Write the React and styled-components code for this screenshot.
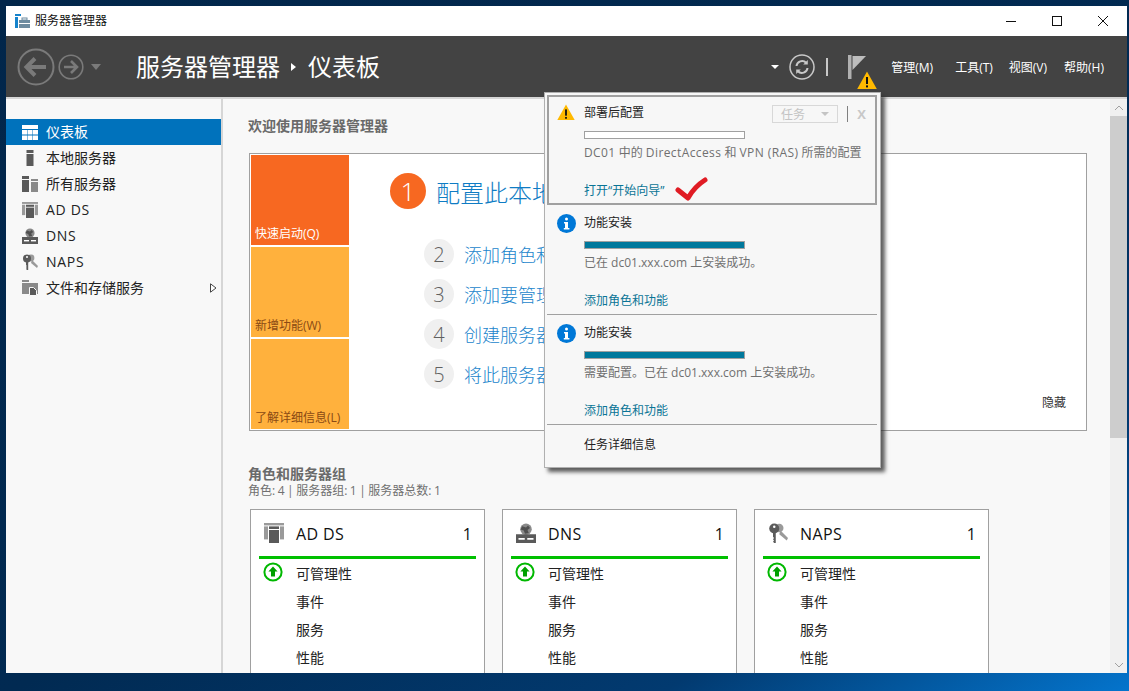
import React from 'react';
import styled, { createGlobalStyle } from 'styled-components';

const GlobalStyle = createGlobalStyle`
  html, body {
    margin: 0;
    height: 100%;
  }
  * {
    box-sizing: border-box;
  }
`

const FONT = `"Open Sans", "Noto Sans CJK SC", sans-serif`

const Desktop = styled.div`
  width: 100vw;
  height: 100vh;
  overflow: hidden;
  padding: 6px 2px 18px 6px;
  font-family: ${FONT};
  background: linear-gradient(150deg, #02264a 0%, #012a52 52%, #023a70 80%, #0474cc 100%);
`

const Window = styled.div`
  position: relative;
  height: 100%;
  display: flex;
  flex-direction: column;
  background: #f8f8f8;
`

// wider latin capitals, as in the system font of the screenshot
const Latin = styled.span`
  letter-spacing: 0.4px;
`

// ------------------- title bar

const TitleBar = styled.div`
  height: 30px;
  flex: none;
  display: flex;
  align-items: center;
  padding: 0 1px 0 9px;
  background: white;
  color: #111;
  font-size: 12px;
`

const TitleText = styled.span`
  flex: 1;
  margin: 0 0 2px 5px;
`

const WinButton = styled.div`
  width: 46px;
  height: 30px;
  display: flex;
  align-items: center;
  justify-content: center;
`

// ------------------- dark header

const Header = styled.div`
  height: 63px;
  flex: none;
  display: flex;
  align-items: center;
  padding: 1px 23px 0 11px;
  background: #434343;
  border-bottom: 2px solid #d6d6d6;
`

const NavButtons = styled.div`
  display: flex;
  align-items: center;
  gap: 3px;
  width: 119px;
`

const Crumbs = styled.div`
  flex: 1;
  display: flex;
  align-items: center;
  gap: 10px;
  color: white;
  font-size: 24px;
  line-height: 32px;
`

const CrumbArrow = styled.i`
  width: 0;
  height: 0;
  margin: 0 2px 0 1px;
  border-left: 5px solid white;
  border-top: 4px solid transparent;
  border-bottom: 4px solid transparent;
`

const DownCaret = styled.i`
  width: 0;
  height: 0;
  margin-right: 10px;
  border-top: 4px solid white;
  border-left: 4px solid transparent;
  border-right: 4px solid transparent;
`

const HeaderDivider = styled.i`
  width: 2px;
  height: 18px;
  margin: 0 20px 0 11px;
  background: #c8c8c8;
`

const FlagBox = styled.div`
  position: relative;
  width: 18px;
  height: 24px;
  margin-right: 25px;
`

const FlagWarn = styled.div`
  position: absolute;
  left: 9px;
  top: 16px;
  line-height: 0;
`

const MenuItem = styled.span`
  color: white;
  font-size: 12px;
  margin-left: ${p => p.$gap}px;
`

// ------------------- body

const Body = styled.div`
  flex: 1;
  min-height: 0;
  display: flex;
`

const Sidebar = styled.div`
  width: 217px;
  flex: none;
  padding-top: 20px;
  border-right: 2px solid #d6d6d6;
`

const NavRow = styled.div`
  height: 26px;
  display: flex;
  align-items: center;
  padding-left: 16px;
  gap: 8px;
  font-size: 14px;
  color: ${p => (p.$active ? 'white' : '#222')};
  background: ${p => (p.$active ? '#0072bc' : 'transparent')};
`

const NavLabel = styled.span`
  flex: 1;
  padding-bottom: 2px;
  letter-spacing: ${p => (p.$latin ? '0.7px' : '0')};
`

const NavArrow = styled.svg`
  margin-right: 4px;
`

const Content = styled.div`
  flex: 1;
  min-width: 0;
  overflow: hidden;
  padding: 17px 23px 0 25px;
`

const Heading = styled.div`
  font-size: 14px;
  line-height: 20px;
  font-weight: 700;
  color: #6a6a6a;
`

const WelcomePanel = styled.div`
  height: 278px;
  margin: 17px 0 0 1px;
  display: flex;
  padding: 1px;
  border: 1px solid #a0a0a0;
  background: white;
`

const Tiles = styled.div`
  width: 98px;
  display: flex;
  flex-direction: column;
  gap: 2px;
`

const Tile = styled.div`
  flex: 1;
  display: flex;
  align-items: flex-end;
  padding: 0 0 2px 4px;
  font-size: 12px;
  line-height: 18px;
  white-space: nowrap;
  color: ${p => p.$color};
  background: ${p => p.$bg};
`

const Steps = styled.div`
  flex: 1;
  display: flex;
  flex-direction: column;
  padding: 18px 0 0 41px;
`

const MainStep = styled.div`
  display: flex;
  align-items: center;
  gap: 10px;
  margin-bottom: 30px;
  font-size: 24px;
  font-weight: 300;
  color: #0f7cc4;
`

const MainCircle = styled.div`
  width: 36px;
  height: 36px;
  border-radius: 50%;
  display: flex;
  align-items: center;
  justify-content: center;
  font-size: 26px;
  font-weight: 300;
  color: white;
  background: #f76821;
`

const SubStep = styled.div`
  display: flex;
  align-items: center;
  gap: 10px;
  margin: 0 0 10px 34px;
  font-size: 18px;
  font-weight: 300;
  color: #1a85cc;
`

const SubCircle = styled.div`
  width: 30px;
  height: 30px;
  border-radius: 50%;
  display: flex;
  align-items: center;
  justify-content: center;
  font-size: 20px;
  font-weight: 300;
  color: #606060;
  background: #f0f0f0;
`

const HideLink = styled.div`
  align-self: flex-end;
  margin: 0 19px 18px 0;
  font-size: 12px;
  color: #333;
`

const GroupHeading = styled(Heading)`
  margin-top: 35px;
  line-height: 16px;
`

const GroupSub = styled.div`
  margin-top: 1px;
  font-size: 12px;
  line-height: 16px;
  word-spacing: -0.6px;
  color: #707070;
`

const Cards = styled.div`
  display: flex;
  gap: 17px;
  margin: 10px 0 0 2px;
`

const Card = styled.div`
  width: 235px;
  height: 200px;
  flex: none;
  padding: 0 8px;
  border: 1px solid #a0a0a0;
  background: white;
`

const CardHead = styled.div`
  height: 46px;
  display: flex;
  align-items: center;
  padding: 0 4px 0 5px;
  gap: 12px;
  border-bottom: 3px solid #00c000;
  box-sizing: content-box;
  font-size: 16px;
  color: #111;
`

const CardTitle = styled.span`
  flex: 1;
  padding-top: 1px;
  letter-spacing: 0.4px;
`

const CardCount = styled.span`
  padding-top: 1px;
`

const CardRow = styled.div`
  height: 28px;
  display: flex;
  align-items: center;
  padding-left: 37px;
  position: relative;
  font-size: 14px;
  color: #222;
`

const StatusIcon = styled.div`
  position: absolute;
  left: 4px;
  top: 3px;
  line-height: 0;
`

// ------------------- scrollbar

const ScrollBar = styled.div`
  width: 17px;
  flex: none;
  display: flex;
  flex-direction: column;
  background: #f0f0f0;
`

const ScrollEnd = styled.div`
  height: 17px;
  flex: none;
  display: flex;
  align-items: center;
  justify-content: center;
`

const ScrollThumb = styled.div`
  height: 322px;
  background: #cdcdcd;
`

const ScrollTrack = styled.div`
  flex: 1;
`

// ------------------- notifications popup

const Popup = styled.div`
  position: absolute;
  left: 538px;
  top: 86px;
  width: 337px;
  height: 376px;
  padding: 2px;
  background: #f7f7f7;
  border: 1px solid #b0b0b0;
  box-shadow: 4px 4px 4px rgba(40, 40, 40, 0.75);
`

const Notice = styled.div`
  position: relative;
  width: 330px;
  height: 110px;
  padding: ${p => (p.$open ? '7px 0 0 8px' : '9px 0 0 10px')};
  display: flex;
  gap: ${p => (p.$open ? '9px' : '8px')};
  border: ${p => (p.$open ? '2px solid #a0a0a0' : '0')};
  border-bottom: 1px solid #a0a0a0;
  ${p => p.$open && 'border-bottom-width: 2px;'}
`

const NoticeBody = styled.div`
  flex: 1;
  font-size: 12px;
`

const NoticeTitle = styled.div`
  line-height: 18px;
  color: #222;
`

const ProgressBar = styled.div`
  width: 161px;
  height: 8px;
  margin-top: 9px;
  border: 1px solid #a0a0a0;
  background: ${p => (p.$full ? '#00789c' : 'white')};
`

const NoticeText = styled.div`
  margin-top: 5px;
  line-height: 18px;
  white-space: nowrap;
  color: #707070;
`

const NoticeLink = styled.div`
  margin-top: 20px;
  line-height: 18px;
  color: #0a7596;
`

const TaskBox = styled.div`
  position: absolute;
  right: 37px;
  top: 8px;
  width: 66px;
  height: 18px;
  display: flex;
  align-items: center;
  justify-content: space-between;
  padding: 0 8px;
  border: 1px solid #d8d8d8;
  font-size: 12px;
  color: #c4c4c4;
`

const TaskCaret = styled.i`
  width: 0;
  height: 0;
  border-top: 4px solid #c4c4c4;
  border-left: 4px solid transparent;
  border-right: 4px solid transparent;
`

const TaskDivider = styled.i`
  position: absolute;
  right: 27px;
  top: 9px;
  width: 1px;
  height: 16px;
  background: #808080;
`

const TaskClose = styled.span`
  position: absolute;
  right: 9px;
  top: 8px;
  font-size: 13px;
  font-weight: 700;
  color: #c8c8c8;
`

const RedCheck = styled.svg`
  position: absolute;
  left: 126px;
  top: 80px;
`

const DetailRow = styled.div`
  padding: 11px 0 0 37px;
  font-size: 12px;
  line-height: 18px;
  color: #222;
`

// ------------------- icons

const AppIcon = () => (
  <svg width="15" height="14" viewBox="0 0 15 14">
    <rect x="0" y="0" width="6" height="2" fill="#1583cc" />
    <rect x="0" y="3" width="3" height="11" fill="#1583cc" />
    <rect x="4" y="6" width="11" height="8" fill="#6f8ca0" />
    <rect x="7" y="4" width="5" height="2" fill="none" stroke="#6f8ca0" />
    <rect x="4" y="9" width="11" height="1" fill="white" />
  </svg>
)

const BackIcon = () => (
  <svg width="38" height="38" viewBox="0 0 38 38" fill="none" stroke="#7a7a7a">
    <circle cx="19" cy="19" r="17.5" strokeWidth="2" />
    <path d="M29 19H10M18 10.5L9.5 19l8.5 8.5" strokeWidth="4" />
  </svg>
)

const ForwardIcon = () => (
  <svg width="26" height="26" viewBox="0 0 26 26" fill="none" stroke="#7a7a7a">
    <circle cx="13" cy="13" r="11.8" strokeWidth="1.6" />
    <path d="M6 13h13M13 7l6 6-6 6" strokeWidth="2.6" />
  </svg>
)

const NavDown = () => (
  <svg width="10" height="6" viewBox="0 0 10 6" style={{ marginLeft: 4 }}>
    <path d="M0 0h10L5 6z" fill="#7a7a7a" />
  </svg>
)

const RefreshIcon = () => (
  <svg width="26" height="26" viewBox="0 0 26 26" fill="none" stroke="#c8c8c8">
    <circle cx="13" cy="13" r="12" strokeWidth="1.5" />
    <path d="M7.5 12a5.6 5.6 0 0 1 9.6-3.2M18.5 14a5.6 5.6 0 0 1-9.6 3.2" strokeWidth="2" />
    <path d="M18.8 6v4.6h-4.6zM7.2 20v-4.6h4.6z" fill="#c8c8c8" stroke="none" />
  </svg>
)

const FlagIcon = () => (
  <svg width="18" height="24" viewBox="0 0 18 24">
    <rect x="0" y="0" width="3.5" height="24" fill="#b0b0b0" />
    <path d="M4.5 1H18L4.5 15z" fill="#bdbdbd" />
  </svg>
)

const WarnIcon = ({ size = 20 }) => (
  <svg width={size} height={size * 0.9} viewBox="0 0 20 18">
    <path d="M10 0.5L19.8 18H0.2z" fill="#ffb900" />
    <rect x="9" y="6" width="2" height="7" fill="#111" />
    <rect x="9" y="14.4" width="2" height="2" fill="#111" />
  </svg>
)

const InfoIcon = () => (
  <svg width="19" height="19" viewBox="0 0 19 19">
    <circle cx="9.5" cy="9.5" r="9.5" fill="#0078d7" />
    <rect x="8" y="3.5" width="3" height="3" rx="1.5" fill="white" />
    <path d="M7 8h4v6h1.4v1.6H6.8V14H8V9.6H7z" fill="white" />
  </svg>
)

const UpIcon = () => (
  <svg width="20" height="20" viewBox="0 0 20 20">
    <circle cx="10" cy="10" r="8.6" fill="white" stroke="#00b800" strokeWidth="2" />
    <path d="M10 4.5l4.6 5H12v5H8v-5H5.4z" fill="#00a000" />
  </svg>
)

const DashIcon = () => (
  <svg width="16" height="15" viewBox="0 0 16 15" fill="white">
    <rect width="16" height="4" />
    <rect y="5" width="5" height="4.5" />
    <rect x="5.5" y="5" width="5" height="4.5" />
    <rect x="11" y="5" width="5" height="4.5" />
    <rect y="10.5" width="5" height="4.5" />
    <rect x="5.5" y="10.5" width="5" height="4.5" />
    <rect x="11" y="10.5" width="5" height="4.5" />
  </svg>
)

const ServerIcon = () => (
  <svg width="16" height="16" viewBox="0 0 16 16">
    <rect x="4.5" y="0" width="7" height="3" fill="#5a5a5a" />
    <rect x="4.5" y="4" width="7" height="12" fill="#5a5a5a" />
  </svg>
)

const AllServersIcon = () => (
  <svg width="16" height="16" viewBox="0 0 16 16">
    <rect x="0" y="0" width="7" height="3" fill="#5a5a5a" />
    <rect x="0" y="4" width="7" height="12" fill="#5a5a5a" />
    <rect x="9" y="3" width="7" height="2" fill="#8a8a8a" />
    <rect x="9" y="6" width="7" height="10" fill="#8a8a8a" />
  </svg>
)

const AdIcon = ({ size = 16 }) => (
  <svg width={size} height={size} viewBox="0 0 20 20">
    <rect x="0" y="0" width="20" height="2.4" fill="#9a9a9a" />
    <rect x="0" y="3.4" width="4" height="13" fill="#9a9a9a" />
    <rect x="16" y="3.4" width="4" height="13" fill="#9a9a9a" />
    <rect x="5" y="3.4" width="10" height="2.6" fill="#5a5a5a" />
    <rect x="5" y="7" width="10" height="13" fill="#5a5a5a" />
  </svg>
)

const DnsIcon = ({ size = 16 }) => (
  <svg width={size} height={size} viewBox="0 0 16 16">
    <circle cx="8" cy="5" r="4.6" fill="#8a8a8a" />
    <path d="M5 2.5l3 1 1.6-1.6 1.6 2-2 1.6 1 2.4-3 .6-1-2.6-2.6-.8z" fill="#505050" />
    <rect x="0" y="9" width="16" height="7" fill="#5a5a5a" />
    <rect x="2" y="12" width="5" height="1.4" fill="white" />
    <rect x="9" y="12" width="5" height="1.4" fill="white" />
  </svg>
)

const KeysIcon = ({ size = 16 }) => (
  <svg width={size} height={size} viewBox="0 0 16 16">
    <circle cx="9" cy="4" r="3.4" fill="#9a9a9a" />
    <path d="M10 6l6 6-1 2-6-5z" fill="#9a9a9a" />
    <circle cx="5" cy="4.4" r="4" fill="#5a5a5a" />
    <circle cx="5" cy="3" r="1" fill="white" />
    <path d="M4 8h2.2v8H5l-1-1 .8-1-.8-1 .8-1-.8-1z" fill="#5a5a5a" />
  </svg>
)

const FilesIcon = () => (
  <svg width="16" height="16" viewBox="0 0 16 16">
    <rect x="0" y="0" width="7" height="2" fill="#8a8a8a" />
    <rect x="0" y="3" width="16" height="11" fill="#8a8a8a" />
    <path d="M7.5 7.5h4l3 3v5h-7z" fill="#5a5a5a" stroke="#f8f8f8" />
  </svg>
)

const NAV_ITEMS = [
  { label: '仪表板', Icon: DashIcon, active: true },
  { label: '本地服务器', Icon: ServerIcon },
  { label: '所有服务器', Icon: AllServersIcon },
  { label: 'AD DS', Icon: AdIcon, latin: true },
  { label: 'DNS', Icon: DnsIcon, latin: true },
  { label: 'NAPS', Icon: KeysIcon, latin: true },
  { label: '文件和存储服务', Icon: FilesIcon, arrow: true },
]

const TILES = [
  { label: '快速启动(Q)', bg: '#f76821', color: 'white' },
  { label: '新增功能(W)', bg: '#ffb13d', color: '#8a4a14' },
  { label: '了解详细信息(L)', bg: '#ffb13d', color: '#8a4a14' },
]

const SUB_STEPS = [
  { n: 2, label: '添加角色和功能' },
  { n: 3, label: '添加要管理的其他服务器' },
  { n: 4, label: '创建服务器组' },
  { n: 5, label: '将此服务器连接到云服务' },
]

const CARDS = [
  { title: 'AD DS', Icon: AdIcon },
  { title: 'DNS', Icon: DnsIcon },
  { title: 'NAPS', Icon: KeysIcon },
]

const App = () => {
  return (
    <>
      <GlobalStyle />
      <Desktop>
        <Window>
          <TitleBar>
            <AppIcon />
            <TitleText>服务器管理器</TitleText>
            <WinButton>
              <svg width="10" height="10" viewBox="0 0 10 10"><path d="M0 5.5h10" stroke="#111" /></svg>
            </WinButton>
            <WinButton>
              <svg width="10" height="10" viewBox="0 0 10 10"><rect x=".5" y=".5" width="9" height="9" fill="none" stroke="#111" /></svg>
            </WinButton>
            <WinButton>
              <svg width="10" height="10" viewBox="0 0 10 10"><path d="M0 0l10 10M10 0L0 10" stroke="#111" /></svg>
            </WinButton>
          </TitleBar>

          <Header>
            <NavButtons>
              <BackIcon />
              <ForwardIcon />
              <NavDown />
            </NavButtons>
            <Crumbs>
              <span>服务器管理器</span>
              <CrumbArrow />
              <span>仪表板</span>
            </Crumbs>
            <DownCaret />
            <RefreshIcon />
            <HeaderDivider />
            <FlagBox>
              <FlagIcon />
              <FlagWarn><WarnIcon /></FlagWarn>
            </FlagBox>
            <MenuItem $gap={0}>管理(M)</MenuItem>
            <MenuItem $gap={22}>工具(T)</MenuItem>
            <MenuItem $gap={16}>视图(V)</MenuItem>
            <MenuItem $gap={17}>帮助(H)</MenuItem>
          </Header>

          <Body>
            <Sidebar>
              {NAV_ITEMS.map(({ label, Icon, active, arrow, latin }) => (
                <NavRow key={label} $active={active}>
                  <Icon />
                  <NavLabel $latin={latin}>{label}</NavLabel>
                  {arrow && (
                    <NavArrow width="7" height="10" viewBox="0 0 7 10">
                      <path d="M.5.8L6 5 .5 9.2z" fill="white" stroke="#444" />
                    </NavArrow>
                  )}
                </NavRow>
              ))}
            </Sidebar>

            <Content>
              <Heading>欢迎使用服务器管理器</Heading>
              <WelcomePanel>
                <Tiles>
                  {TILES.map(t => (
                    <Tile key={t.label} $bg={t.bg} $color={t.color}>{t.label}</Tile>
                  ))}
                </Tiles>
                <Steps>
                  <MainStep>
                    <MainCircle>1</MainCircle>
                    配置此本地服务器
                  </MainStep>
                  {SUB_STEPS.map(s => (
                    <SubStep key={s.n}>
                      <SubCircle>{s.n}</SubCircle>
                      {s.label}
                    </SubStep>
                  ))}
                </Steps>
                <HideLink>隐藏</HideLink>
              </WelcomePanel>

              <GroupHeading>角色和服务器组</GroupHeading>
              <GroupSub>角色: 4 | 服务器组: 1 | 服务器总数: 1</GroupSub>
              <Cards>
                {CARDS.map(({ title, Icon }) => (
                  <Card key={title}>
                    <CardHead>
                      <Icon size={20} />
                      <CardTitle>{title}</CardTitle>
                      <CardCount>1</CardCount>
                    </CardHead>
                    <CardRow>
                      <StatusIcon><UpIcon /></StatusIcon>
                      可管理性
                    </CardRow>
                    <CardRow>事件</CardRow>
                    <CardRow>服务</CardRow>
                    <CardRow>性能</CardRow>
                  </Card>
                ))}
              </Cards>
            </Content>

            <ScrollBar>
              <ScrollEnd>
                <svg width="10" height="6" viewBox="0 0 10 6"><path d="M1 5l4-4 4 4" fill="none" stroke="#a0a0a0" /></svg>
              </ScrollEnd>
              <ScrollThumb />
              <ScrollTrack />
              <ScrollEnd>
                <svg width="10" height="6" viewBox="0 0 10 6"><path d="M1 1l4 4 4-4" fill="none" stroke="#a0a0a0" /></svg>
              </ScrollEnd>
            </ScrollBar>
          </Body>

          <Popup>
            <Notice $open>
              <WarnIcon size={18} />
              <NoticeBody>
                <NoticeTitle>部署后配置</NoticeTitle>
                <ProgressBar />
                <NoticeText>
                  <Latin>DC01</Latin> 中的 <Latin>DirectAccess</Latin> 和 <Latin>VPN (RAS)</Latin> 所需的配置
                </NoticeText>
                <NoticeLink>打开“开始向导”</NoticeLink>
              </NoticeBody>
              <TaskBox>任务<TaskCaret /></TaskBox>
              <TaskDivider />
              <TaskClose>X</TaskClose>
              <RedCheck width="34" height="26" viewBox="0 0 34 26">
                <path d="M3 13L13 21C17 14 22 8 30 3" fill="none" stroke="#e01c24" strokeWidth="5" strokeLinecap="round" strokeLinejoin="round" />
              </RedCheck>
            </Notice>
            <Notice>
              <InfoIcon />
              <NoticeBody>
                <NoticeTitle>功能安装</NoticeTitle>
                <ProgressBar $full />
                <NoticeText>已在 dc01.xxx.com 上安装成功。</NoticeText>
                <NoticeLink>添加角色和功能</NoticeLink>
              </NoticeBody>
            </Notice>
            <Notice>
              <InfoIcon />
              <NoticeBody>
                <NoticeTitle>功能安装</NoticeTitle>
                <ProgressBar $full />
                <NoticeText>需要配置。已在 dc01.xxx.com 上安装成功。</NoticeText>
                <NoticeLink>添加角色和功能</NoticeLink>
              </NoticeBody>
            </Notice>
            <DetailRow>任务详细信息</DetailRow>
          </Popup>
        </Window>
      </Desktop>
    </>
  );
};

export default App;
